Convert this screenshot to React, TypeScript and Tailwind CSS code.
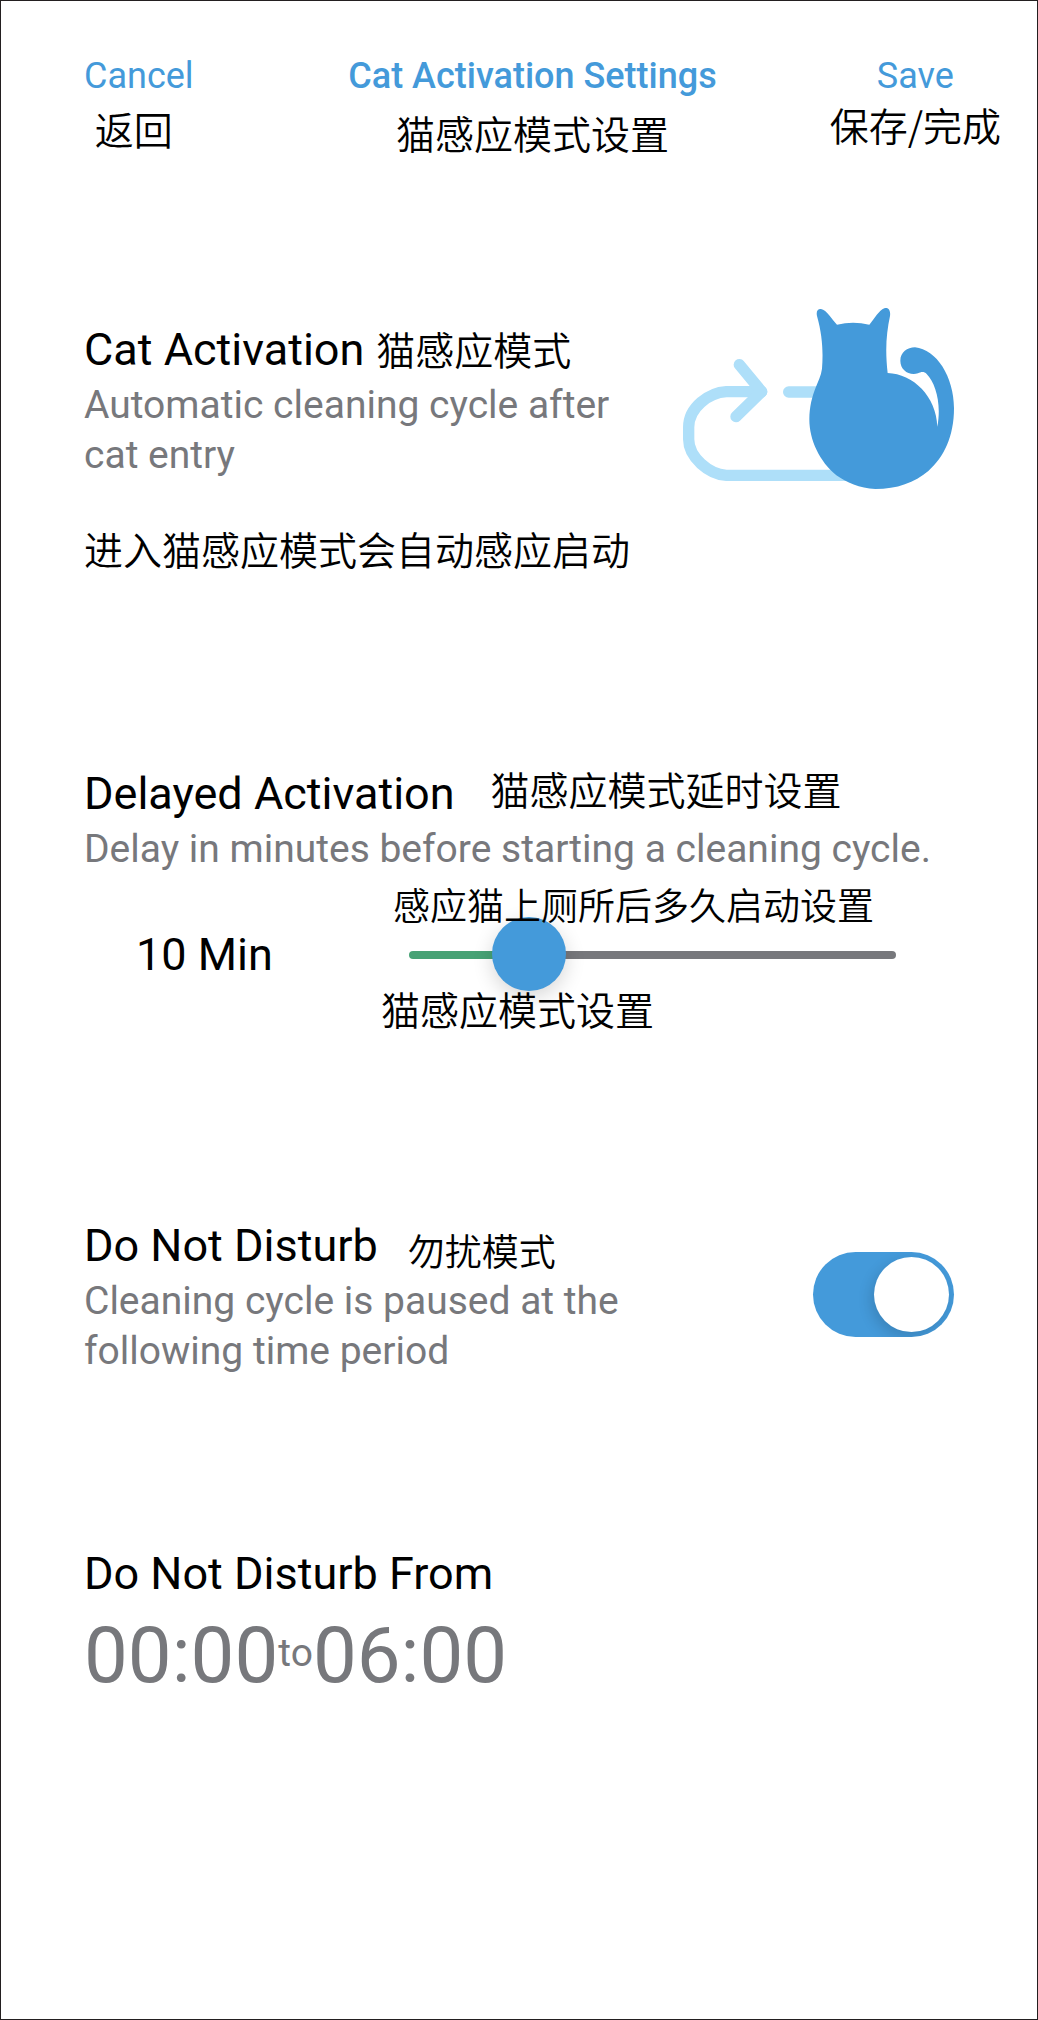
import { useState, type CSSProperties } from "react";

function CatCycle() {
  return (
    <svg
      className="w-[271px] shrink-0"
      viewBox="70 84 813 543"
      role="img"
      aria-label="Cat and cleaning cycle"
    >
      <g
        fill="none"
        stroke="#aedff9"
        strokeWidth="34"
        strokeLinecap="round"
        strokeLinejoin="round"
      >
        <path d="M306 335 H200 C148 338 87 382 87 442 V478 C87 532 148 583 200 586 H560" />
        <path d="M239 254 L306 335 L229 410" />
        <path d="M387 336 H500" />
      </g>
      <path
        fill="#449ada"
        d="M532 134 Q580 122 629 134 C645 115 658 91 674 85 C688 81 693 94 691 108 C680 160 676 210 684 279 C760 281 831 350 833 440 C846 370 828 310 801 282 C793 273 783 276 775 280 C748 288 722 270 722 242 C722 217 743 202 766 202 C830 208 883 290 883 385 C883 470 852 533 806 573 C765 608 712 627 647 627 C600 625 560 607 530 586 C480 545 449 480 449 418 C449 380 457 350 469 320 C475 304 484 288 487 266 C491 215 488 165 472 108 C469 94 474 86 484 87 C501 89 517 119 532 134 Z"
      />
    </svg>
  );
}

const title = "text-[45px] leading-[52px] text-black";
const body = "mt-1 text-[39px] leading-[50px] text-[#77787c]";
const note =
  "font-['Noto_Sans_CJK_SC',sans-serif] font-[350] text-[39px] leading-[40px] text-black whitespace-nowrap";
const noteSmall =
  "font-['Noto_Sans_CJK_SC',sans-serif] font-[350] text-[37px] leading-[44px] text-black whitespace-nowrap";

export default function App() {
  const [minutes, setMinutes] = useState(10);
  const [quiet, setQuiet] = useState(true);
  const max = 50;
  const fill = { "--fill": `${(minutes / max) * 100}%` } as CSSProperties;

  return (
    <main className="min-h-screen border border-[#231f20] bg-white font-['Roboto','Noto_Sans_CJK_SC',sans-serif]">
      <header className="grid grid-cols-[1fr_auto_1fr] items-start pt-[53px] pr-9 pl-[83px]">
        <div className="flex flex-col items-center gap-2.5 justify-self-start">
          <button type="button" className="text-[36px] leading-[44px] text-[#449ada]">
            Cancel
          </button>
          <span className={`pr-2.5 ${note}`}>返回</span>
        </div>
        <div className="mr-5 flex flex-col items-center gap-3.5">
          <h1 className="text-[36px] leading-[44px] font-medium text-[#449ada]">
            Cat Activation Settings
          </h1>
          <span className={note}>猫感应模式设置</span>
        </div>
        <div className="flex flex-col items-center gap-1.5 justify-self-end">
          <button type="button" className="text-[36px] leading-[44px] text-[#449ada]">
            Save
          </button>
          <span className={note}>保存/完成</span>
        </div>
      </header>

      <section className="mt-[156px] flex items-start justify-between px-[83px]">
        <div className="min-w-0 pt-4">
          <div className="flex items-start gap-3">
            <h2 className={title}>Cat Activation</h2>
            <span className={`mt-1 ${note}`}>猫感应模式</span>
          </div>
          <p className={body}>
            Automatic cleaning cycle after
            <br />
            cat entry
          </p>
          <p className={`mt-12 ${note}`}>进入猫感应模式会自动感应启动</p>
        </div>
        <CatCycle />
      </section>

      <section className="mt-[200px] px-[83px]">
        <div className="flex items-start gap-9">
          <h2 className={title}>Delayed Activation</h2>
          <span className={note}>猫感应模式延时设置</span>
        </div>
        <p className={body}>Delay in minutes before starting a cleaning cycle.</p>
        <div className="mt-2 flex items-center pr-[58px]">
          <label htmlFor="delay" className={`w-[297px] shrink-0 pl-[52px] ${title}`}>
            {minutes} Min
          </label>
          <div className="flex min-w-0 flex-1 flex-col">
            <span className={`z-10 -mb-2 pl-3 ${noteSmall}`}>感应猫上厕所后多久启动设置</span>
            <div className="flex h-[74px] items-center pl-7">
              <input
                id="delay"
                type="range"
                min={0}
                max={max}
                value={minutes}
                onChange={(e) => setMinutes(Number(e.target.value))}
                style={fill}
                className="h-[74px] w-full appearance-none bg-transparent [&::-webkit-slider-runnable-track]:h-2 [&::-webkit-slider-runnable-track]:rounded-full [&::-webkit-slider-runnable-track]:bg-[linear-gradient(to_right,#47a275_var(--fill),#77787c_var(--fill))] [&::-webkit-slider-thumb]:-mt-[34px] [&::-webkit-slider-thumb]:size-[74px] [&::-webkit-slider-thumb]:appearance-none [&::-webkit-slider-thumb]:rounded-full [&::-webkit-slider-thumb]:bg-[#449ada] [&::-webkit-slider-thumb]:shadow-[0_6px_20px_rgba(0,0,0,0.16)]"
              />
            </div>
            <span className={`z-10 -mt-1 ${note}`}>猫感应模式设置</span>
          </div>
        </div>
      </section>

      <section className="mt-[192px] flex items-start justify-between px-[83px]">
        <div>
          <div className="flex items-end gap-[30px]">
            <h2 className={title} id="quiet-title">
              Do Not Disturb
            </h2>
            <span className={noteSmall}>勿扰模式</span>
          </div>
          <p className={body}>
            Cleaning cycle is paused at the
            <br />
            following time period
          </p>
        </div>
        <input
          type="checkbox"
          role="switch"
          aria-labelledby="quiet-title"
          checked={quiet}
          onChange={(e) => setQuiet(e.target.checked)}
          className="mt-8 flex h-[85px] w-[141px] shrink-0 appearance-none items-center overflow-hidden rounded-full bg-[#b5b6b9] px-[5px] before:size-[75px] before:rounded-full before:bg-white before:shadow-[-3px_5px_14px_rgba(0,0,0,0.15)] before:content-[''] checked:justify-end checked:bg-[#449ada]"
        />
      </section>

      <section className="mt-[172px] px-[83px]">
        <h2 className={title}>Do Not Disturb From</h2>
        <div className="mt-3 flex items-center text-[78px] leading-[88px] text-[#77787c]">
          <button type="button">00:00</button>
          <span className="pb-1.5 text-[39px] leading-[50px]">to</span>
          <button type="button">06:00</button>
        </div>
      </section>
    </main>
  );
}
